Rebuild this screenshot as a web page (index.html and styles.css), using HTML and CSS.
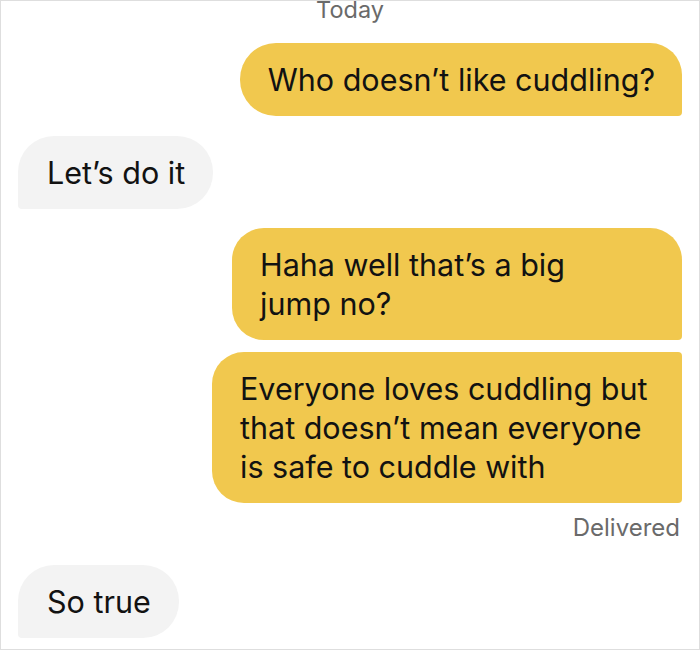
FILE: index.html
```html
<!DOCTYPE html>
<html lang="en">
<head>
<meta charset="utf-8">
<title>Chat</title>
<link rel="stylesheet" href="styles.css">
</head>
<body>
<div class="screen">
  <div class="day">Today</div>
  <div class="row row-out first">
    <div class="bubble out single">Who doesn’t like cuddling?</div>
  </div>
  <div class="row row-in gap-20">
    <div class="bubble in">Let’s do it</div>
  </div>
  <div class="row row-out gap-19">
    <div class="bubble out group-top wide">Haha well that’s a big<br>jump no?</div>
  </div>
  <div class="row row-out gap-12">
    <div class="bubble out group-bottom">Everyone loves cuddling but that doesn’t mean everyone is safe to cuddle with</div>
  </div>
  <div class="status">Delivered</div>
  <div class="row row-in gap-status">
    <div class="bubble in">So true</div>
  </div>
</div>
</body>
</html>
```

FILE: styles.css
```css
html, body {
  margin: 0;
  padding: 0;
  background: #ffffff;
}

.screen {
  width: 700px;
  height: 650px;
  box-sizing: border-box;
  border: 1px solid #dedede;
  overflow: hidden;
  padding: 0 17px 0 17px;
  display: flex;
  flex-direction: column;
  font-family: "Inter", "Noto Sans", sans-serif;
  color: #121212;
}

.day {
  text-align: center;
  font-size: 23.5px;
  line-height: 24px;
  color: #6a6a6a;
  margin-top: -3px;
}

.row {
  display: flex;
}

.row-out {
  justify-content: flex-end;
}

.row-in {
  justify-content: flex-start;
}

.first {
  margin-top: 21px;
}

.gap-20 { margin-top: 20px; }
.gap-19 { margin-top: 19px; }
.gap-12 { margin-top: 12px; }
.gap-status { margin-top: 23px; }

.bubble {
  font-size: 30.5px;
  line-height: 39px;
  padding: 17px 27px 17px 28px;
  box-sizing: border-box;
  max-width: 470px;
}

.out {
  background: #f1c84e;
  border-radius: 36px 32px 4px 36px;
}

.in {
  background: #f3f3f3;
  border-radius: 36px 36px 36px 4px;
  padding-left: 29px;
  padding-right: 28px;
}

.group-top {
  border-radius: 32px 32px 4px 32px;
}

.group-bottom {
  border-radius: 32px 4px 4px 32px;
}

.wide {
  width: 450px;
}

.status {
  text-align: right;
  font-size: 24px;
  line-height: 28px;
  color: #6a6a6a;
  margin-top: 11px;
  padding-right: 2px;
}
```
